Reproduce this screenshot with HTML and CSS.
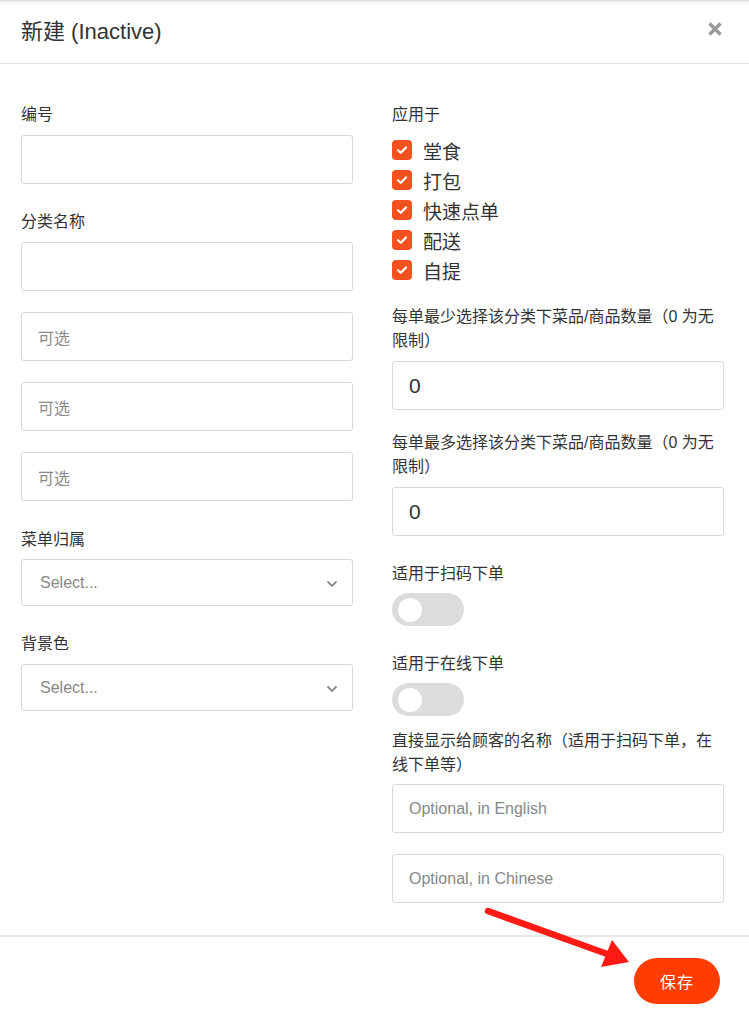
FILE: index.html
```html
<!DOCTYPE html>
<html lang="zh">
<head>
<meta charset="utf-8">
<title>新建 (Inactive)</title>
<link rel="stylesheet" href="styles.css">
</head>
<body>
<div class="modal">
  <header class="modal-header">
    <h1 class="modal-title">新建 (Inactive)</h1>
    <button class="close-btn" aria-label="close">
      <svg width="16" height="16" viewBox="0 0 16 16"><path d="M2.5 2.5 L13.5 13.5 M13.5 2.5 L2.5 13.5" stroke="#9a9a9a" stroke-width="3.4" stroke-linecap="butt"/></svg>
    </button>
  </header>

  <main class="modal-body">
    <div class="col col-left">
      <div class="label">编号</div>
      <div class="input"></div>

      <div class="label l-name">分类名称</div>
      <div class="input"></div>

      <div class="input opt first-opt"><span class="ph">可选</span></div>
      <div class="input opt"><span class="ph">可选</span></div>
      <div class="input opt"><span class="ph">可选</span></div>

      <div class="label l-menu">菜单归属</div>
      <div class="select"><span class="ph-latin">Select...</span>
        <svg class="chev" width="12" height="8" viewBox="0 0 12 8"><path d="M1.5 1.5 L6 6 L10.5 1.5" fill="none" stroke="#8a8a8a" stroke-width="1.8"/></svg>
      </div>

      <div class="label l-bg">背景色</div>
      <div class="select"><span class="ph-latin">Select...</span>
        <svg class="chev" width="12" height="8" viewBox="0 0 12 8"><path d="M1.5 1.5 L6 6 L10.5 1.5" fill="none" stroke="#8a8a8a" stroke-width="1.8"/></svg>
      </div>
    </div>

    <div class="col col-right">
      <div class="label">应用于</div>
      <ul class="checks">
        <li><span class="cb"><svg width="12" height="10" viewBox="0 0 12 10"><path d="M2 5.2 L4.8 7.8 L10 2.4" fill="none" stroke="#fff" stroke-width="2.2" stroke-linecap="round" stroke-linejoin="round"/></svg></span>堂食</li>
        <li><span class="cb"><svg width="12" height="10" viewBox="0 0 12 10"><path d="M2 5.2 L4.8 7.8 L10 2.4" fill="none" stroke="#fff" stroke-width="2.2" stroke-linecap="round" stroke-linejoin="round"/></svg></span>打包</li>
        <li><span class="cb"><svg width="12" height="10" viewBox="0 0 12 10"><path d="M2 5.2 L4.8 7.8 L10 2.4" fill="none" stroke="#fff" stroke-width="2.2" stroke-linecap="round" stroke-linejoin="round"/></svg></span>快速点单</li>
        <li><span class="cb"><svg width="12" height="10" viewBox="0 0 12 10"><path d="M2 5.2 L4.8 7.8 L10 2.4" fill="none" stroke="#fff" stroke-width="2.2" stroke-linecap="round" stroke-linejoin="round"/></svg></span>配送</li>
        <li><span class="cb"><svg width="12" height="10" viewBox="0 0 12 10"><path d="M2 5.2 L4.8 7.8 L10 2.4" fill="none" stroke="#fff" stroke-width="2.2" stroke-linecap="round" stroke-linejoin="round"/></svg></span>自提</li>
      </ul>

      <div class="label l-min">每单最少选择该分类下菜品/商品数量（0 为无限制）</div>
      <div class="input"><span class="val">0</span></div>

      <div class="label l-max">每单最多选择该分类下菜品/商品数量（0 为无限制）</div>
      <div class="input"><span class="val">0</span></div>

      <div class="label l-scan">适用于扫码下单</div>
      <div class="toggle"><span class="knob"></span></div>

      <div class="label l-online">适用于在线下单</div>
      <div class="toggle"><span class="knob"></span></div>

      <div class="label l-display">直接显示给顾客的名称（适用于扫码下单，在线下单等）</div>
      <div class="input"><span class="ph-latin">Optional, in English</span></div>
      <div class="input opt-cn"><span class="ph-latin">Optional, in Chinese</span></div>
    </div>
  </main>

  <footer class="modal-footer">
    <button class="save-btn">保存</button>
  </footer>

  <svg class="annot-arrow" width="749" height="1024" viewBox="0 0 749 1024">
    <line x1="488" y1="911" x2="610" y2="955" stroke="#ff1a14" stroke-width="6.5" stroke-linecap="round"/>
    <polygon points="612,940 629,962 601,967" fill="#ff1a14"/>
  </svg>
</div>
</body>
</html>
```
FILE: styles.css
```css
* { box-sizing: border-box; }
html, body { margin: 0; padding: 0; background: #fff; }
body {
  font-family: "Liberation Sans", "Noto Sans CJK SC", sans-serif;
  color: #333;
  width: 749px;
  height: 1024px;
  overflow: hidden;
}
.modal { position: relative; width: 749px; height: 1024px; }

.modal-header {
  height: 64px;
  display: flex;
  align-items: center;
  justify-content: space-between;
  padding: 0 26px 6px 21px;
  border-bottom: 1px solid #e3e3e3;
  background: linear-gradient(#dcdcdc 0px, #f3f3f3 2px, #fff 5px);
}
.modal-title {
  margin: 0;
  font-size: 22px;
  font-weight: normal;
  color: #333;
}
.close-btn {
  border: 0;
  background: none;
  padding: 0;
  display: flex;
  margin-top: 1px;
}

.modal-body {
  display: grid;
  grid-template-columns: 332px 332px;
  column-gap: 39px;
  padding: 39px 0 32px 21px;
  border-bottom: 2px solid #e6e6e6;
}
.col { display: flex; flex-direction: column; }

.label {
  font-size: 16px;
  line-height: 24px;
  color: #333;
  margin-bottom: 8px;
}
.input, .select {
  height: 49px;
  border: 1px solid #d9d9d9;
  border-radius: 3px;
  display: flex;
  align-items: center;
  padding-left: 16px;
  background: #fff;
}
.select { height: 47px; padding-left: 18px; padding-right: 14px; justify-content: space-between; }
.ph { font-size: 16px; color: #8a8a8a; }
.ph-latin { font-size: 16px; color: #888; }
.val { font-size: 21px; color: #333; }

.l-name { margin-top: 26px; }
.first-opt { margin-top: 21px; }
.opt + .opt { margin-top: 21px; }
.l-menu { margin-top: 27px; margin-bottom: 7px; }
.l-bg { margin-top: 26px; }
.chev { display: block; margin-top: 2px; }

.checks { list-style: none; margin: 0; padding: 0; }
.checks li {
  height: 30px;
  display: flex;
  align-items: center;
  font-size: 19px;
  color: #333;
}
.cb {
  width: 20px;
  height: 20px;
  border-radius: 4px;
  background: #f4511e;
  display: inline-flex;
  align-items: center;
  justify-content: center;
  margin-right: 11px;
}
.cb svg { display: block; }

.l-min { margin-top: 20px; }
.l-max { margin-top: 21px; }
.l-scan { margin-top: 26px; margin-bottom: 7px; }
.l-online { margin-top: 26px; margin-bottom: 7px; }
.l-display { margin-top: 13px; margin-bottom: 7px; }
.opt-cn { margin-top: 21px; }

.toggle {
  width: 72px;
  height: 33px;
  border-radius: 17px;
  background: #dcdcdc;
  display: flex;
  align-items: center;
  padding-left: 6px;
}
.knob {
  width: 24px;
  height: 24px;
  border-radius: 50%;
  background: #fff;
}

.modal-footer {
  display: flex;
  justify-content: flex-end;
  padding: 21px 29px 0 0;
}
.save-btn {
  width: 86px;
  height: 46px;
  border: 0;
  border-radius: 23px;
  background: #ff3d00;
  color: #fff;
  font-family: "Liberation Sans", "Noto Sans CJK SC", sans-serif;
  font-size: 16px;
  letter-spacing: 1px;
  padding: 0;
}

.annot-arrow {
  position: absolute;
  left: 0;
  top: 0;
  pointer-events: none;
}
```
